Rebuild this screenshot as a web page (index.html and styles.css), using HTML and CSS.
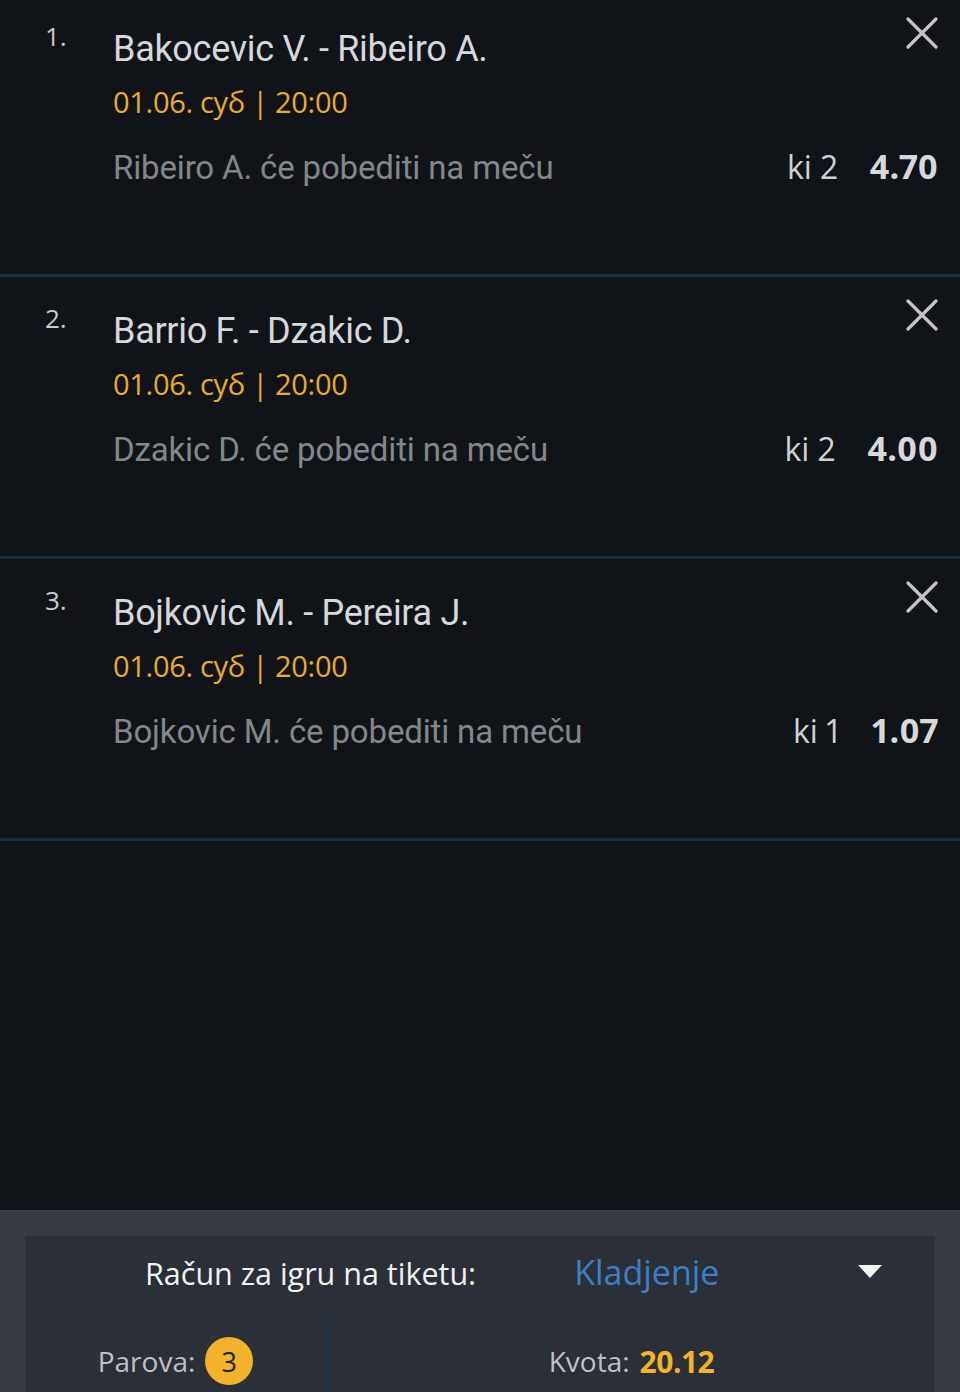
FILE: index.html
```html
<!DOCTYPE html>
<html lang="sr">
<head>
<meta charset="utf-8">
<title>Tiket</title>
<link rel="stylesheet" href="styles.css">
</head>
<body>
<div class="page">
  <div class="list">
    <div class="item">
      <div class="num">1.</div>
      <div class="body">
        <div class="head">
          <div class="title">Bakocevic V. - Ribeiro A.</div>
          <svg class="close" viewBox="0 0 32 32" width="32" height="32"><path d="M2 2L30 30M30 2L2 30"/></svg>
        </div>
        <div class="date">01.06. суб | 20:00</div>
        <div class="pick">
          <div class="desc">Ribeiro A. će pobediti na meču</div>
          <div class="odds"><span class="ki">ki 2</span><span class="val">4.70</span></div>
        </div>
      </div>
    </div>
    <div class="item">
      <div class="num">2.</div>
      <div class="body">
        <div class="head">
          <div class="title">Barrio F. - Dzakic D.</div>
          <svg class="close" viewBox="0 0 32 32" width="32" height="32"><path d="M2 2L30 30M30 2L2 30"/></svg>
        </div>
        <div class="date">01.06. суб | 20:00</div>
        <div class="pick">
          <div class="desc">Dzakic D. će pobediti na meču</div>
          <div class="odds"><span class="ki">ki 2</span><span class="val">4.00</span></div>
        </div>
      </div>
    </div>
    <div class="item">
      <div class="num">3.</div>
      <div class="body">
        <div class="head">
          <div class="title">Bojkovic M. - Pereira J.</div>
          <svg class="close" viewBox="0 0 32 32" width="32" height="32"><path d="M2 2L30 30M30 2L2 30"/></svg>
        </div>
        <div class="date">01.06. суб | 20:00</div>
        <div class="pick">
          <div class="desc">Bojkovic M. će pobediti na meču</div>
          <div class="odds"><span class="ki">ki 1</span><span class="val">1.07</span></div>
        </div>
      </div>
    </div>
  </div>
  <div class="panel">
    <div class="box">
      <div class="acct">
        <span class="acct-label">Račun za igru na tiketu:</span>
        <span class="acct-value">Kladjenje</span>
        <span class="caret"></span>
      </div>
      <div class="stats">
        <div class="cell cell-left"><span class="lbl">Parova:</span><span class="badge">3</span></div>
        <div class="cell cell-right"><span class="lbl">Kvota:</span><span class="total">20.12</span></div>
      </div>
    </div>
  </div>
</div>
</body>
</html>
```
FILE: styles.css
```css
* { box-sizing: border-box; }
html, body { margin: 0; padding: 0; }
body {
  background: #101418;
  font-family: "Open Sans", Roboto, "Liberation Sans", sans-serif;
  color: #d6d8db;
}
.page {
  width: 960px;
  height: 1392px;
  display: flex;
  flex-direction: column;
  overflow: hidden;
}
.list { margin-top: -5px; }
.item {
  display: flex;
  height: 282px;
  border-bottom: 3px solid #1a2d3e;
  padding-right: 22px;
}
.num {
  width: 113px;
  padding-left: 45px;
  padding-top: 26px;
  font-size: 26px;
  line-height: 30px;
  color: #c9cacc;
}
.body { flex: 1; padding-top: 22px; }
.head { display: flex; justify-content: space-between; align-items: flex-start; }
.title {
  margin-top: 10px;
  font-family: Roboto, "Open Sans", sans-serif;
  font-size: 36px;
  line-height: 44px;
  letter-spacing: -0.3px;
  color: #d5d7da;
}
.close { stroke: #c4c5c7; stroke-width: 3.2; fill: none; stroke-linecap: round; flex: none; }
.date {
  margin-top: 13px;
  font-family: "Open Sans", Roboto, sans-serif;
  font-size: 29px;
  line-height: 36px;
  letter-spacing: -0.3px;
  color: #e9aa2d;
}
.pick { display: flex; justify-content: space-between; align-items: baseline; margin-top: 23px; }
.desc {
  font-family: Roboto, "Open Sans", sans-serif;
  font-size: 33px;
  line-height: 40px;
  letter-spacing: -0.15px;
  color: #83868a;
}
.odds { display: flex; align-items: baseline; font-variant-numeric: proportional-nums; }
.ki { font-size: 32px; color: #d0d1d3; margin-right: 32px; }
.val { font-size: 34px; font-weight: 700; color: #d7d8da; }
.panel {
  margin-top: auto;
  height: 182px;
  background: #363a43;
  border-top: 1px solid #3e424b;
  padding: 25px 25px 0;
  flex: none;
}
.box { background: #2b2f37; height: 100%; display: flex; flex-direction: column; }
.acct { display: flex; align-items: baseline; height: 81px; padding-top: 13px; }
.acct-label { margin-left: 120px; font-size: 30.5px; color: #f1f2f3; }
.acct-value { margin-left: 98px; font-size: 34px; color: #3d7fc4; }
.caret {
  margin-left: auto;
  margin-right: 53px;
  margin-top: 16px;
  align-self: flex-start;
  width: 0; height: 0;
  border-left: 12px solid transparent;
  border-right: 12px solid transparent;
  border-top: 13px solid #f4f4f4;
}
.stats { flex: 1; display: flex; }
.cell { display: flex; align-items: center; justify-content: center; padding-top: 13px; }
.cell-left { width: 303px; border-right: 2px solid #163650; }
.cell-right { flex: 1; }
.lbl { font-size: 28px; color: #bfc1c5; }
.badge {
  margin-left: 10px;
  width: 48px; height: 48px;
  border-radius: 50%;
  background: #f2b32a;
  color: #222;
  font-size: 27px;
  display: flex; align-items: center; justify-content: center;
}
.total { margin-left: 10px; font-size: 30px; font-weight: 700; color: #f2b32a; letter-spacing: -0.5px; }
```
